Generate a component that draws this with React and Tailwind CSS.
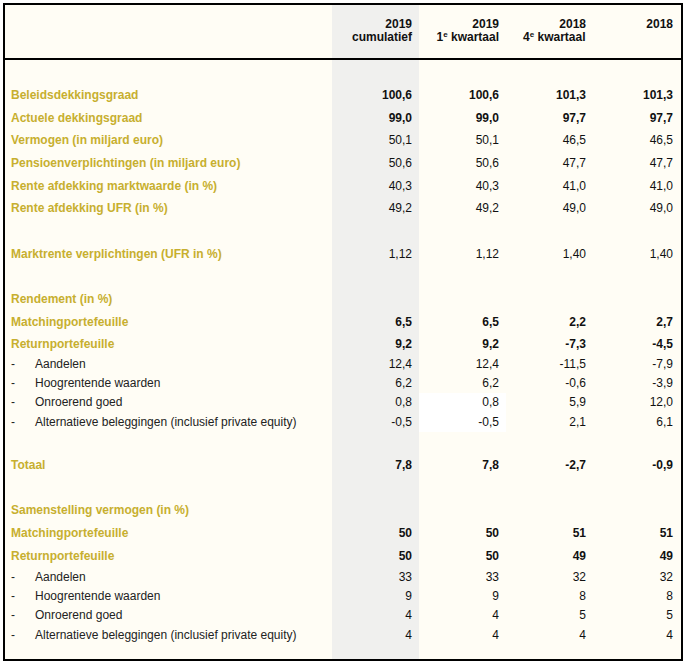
import React from 'react';

const GOLD = 'text-[#c7af2f]';

// type: h = vet, m = goud label met normale waarden, s = subregel, b = leeg, t = alleen titel
const rows = [
    { type: 'b', h: 'h-[23.7px]' },
    { type: 'h', label: 'Beleidsdekkingsgraad', v: ['100,6', '100,6', '101,3', '101,3'] },
    { type: 'h', label: 'Actuele dekkingsgraad', v: ['99,0', '99,0', '97,7', '97,7'] },
    { type: 'm', label: 'Vermogen (in miljard euro)', v: ['50,1', '50,1', '46,5', '46,5'] },
    { type: 'm', label: 'Pensioenverplichtingen (in miljard euro)', v: ['50,6', '50,6', '47,7', '47,7'] },
    { type: 'm', label: 'Rente afdekking marktwaarde (in %)', v: ['40,3', '40,3', '41,0', '41,0'] },
    { type: 'm', label: 'Rente afdekking UFR (in %)', v: ['49,2', '49,2', '49,0', '49,0'] },
    { type: 'b' },
    { type: 'm', label: 'Marktrente verplichtingen (UFR in %)', v: ['1,12', '1,12', '1,40', '1,40'] },
    { type: 'b' },
    { type: 't', label: 'Rendement (in %)' },
    { type: 'h', label: 'Matchingportefeuille', v: ['6,5', '6,5', '2,2', '2,7'] },
    { type: 'h', label: 'Returnportefeuille', v: ['9,2', '9,2', '-7,3', '-4,5'], h: 'h-[20.7px]' },
    { type: 's', label: 'Aandelen', v: ['12,4', '12,4', '-11,5', '-7,9'] },
    { type: 's', label: 'Hoogrentende waarden', v: ['6,2', '6,2', '-0,6', '-3,9'] },
    { type: 's', label: 'Onroerend goed', v: ['0,8', '0,8', '5,9', '12,0'], white: true },
    { type: 's', label: 'Alternatieve beleggingen (inclusief private equity)', v: ['-0,5', '-0,5', '2,1', '6,1'], white: true },
    { type: 'b', h: 'h-[22px]' },
    { type: 'h', label: 'Totaal', v: ['7,8', '7,8', '-2,7', '-0,9'] },
    { type: 'b' },
    { type: 't', label: 'Samenstelling vermogen (in %)' },
    { type: 'h', label: 'Matchingportefeuille', v: ['50', '50', '51', '51'] },
    { type: 'h', label: 'Returnportefeuille', v: ['50', '50', '49', '49'] },
    { type: 's', label: 'Aandelen', v: ['33', '33', '32', '32'] },
    { type: 's', label: 'Hoogrentende waarden', v: ['9', '9', '8', '8'] },
    { type: 's', label: 'Onroerend goed', v: ['4', '4', '5', '5'] },
    { type: 's', label: 'Alternatieve beleggingen (inclusief private equity)', v: ['4', '4', '4', '4'] },
];

const GRID = 'grid grid-cols-[327px_87px_87px_87px_87px]';

const Row = ({ row }) => {
    const isSub = row.type === 's';
    const height = row.h || (isSub ? 'h-[19.4px]' : 'h-[22.7px]');
    const bold = row.type === 'h';
    const vals = row.v || ['', '', '', ''];

    return (
        <div className={`${GRID} ${height} items-center`}>
            <div className="h-full flex items-center pl-[6px]">
                {isSub ? (
                    <span className="flex text-[#222]">
                        <span className="w-[24px]">-</span>
                        <span>{row.label}</span>
                    </span>
                ) : (
                    <span className={`${GOLD} font-bold`}>{row.label}</span>
                )}
            </div>
            {vals.map((val, i) => (
                <div
                    key={i}
                    className={`h-full flex items-center justify-end pr-[7px] text-[#111] ${bold ? 'font-bold' : ''} ${i === 0 ? 'bg-[#f0f0ee]' : ''} ${i === 1 && row.white ? 'bg-white' : ''}`}
                >
                    {val}
                </div>
            ))}
        </div>
    );
};

const App = () => {
    return (
        <div className="bg-white min-h-[665px] pl-[3px] pt-[3px]" style={{ fontFamily: '"Liberation Sans", Arial, sans-serif' }}>
            <div className="w-[680px] h-[658px] border-2 border-black bg-[#fffdf5] text-[12px] leading-none overflow-hidden">
                {/* kop */}
                <div className={`${GRID} h-[55px] border-b-2 border-black font-bold text-[#111] leading-[13px]`}>
                    <div />
                    <div className="bg-[#f0f0ee] pt-[13px] pr-[7px] text-right">2019<br />cumulatief</div>
                    <div className="pt-[13px] pr-[7px] text-right">2019<br />1<sup className="text-[8px]">e</sup> kwartaal</div>
                    <div className="pt-[13px] pr-[7px] text-left pl-[17px]">
                        <div className="text-right w-[63px]">2018</div>
                        <div>4<sup className="text-[8px]">e</sup> kwartaal</div>
                    </div>
                    <div className="pt-[13px] pr-[7px] text-right">2018</div>
                </div>
                {rows.map((row, i) => (
                    <Row key={i} row={row} />
                ))}
                <div className={`${GRID} h-[40px]`}>
                    <div />
                    <div className="bg-[#f0f0ee]" />
                </div>
            </div>
        </div>
    );
};

export default App;
